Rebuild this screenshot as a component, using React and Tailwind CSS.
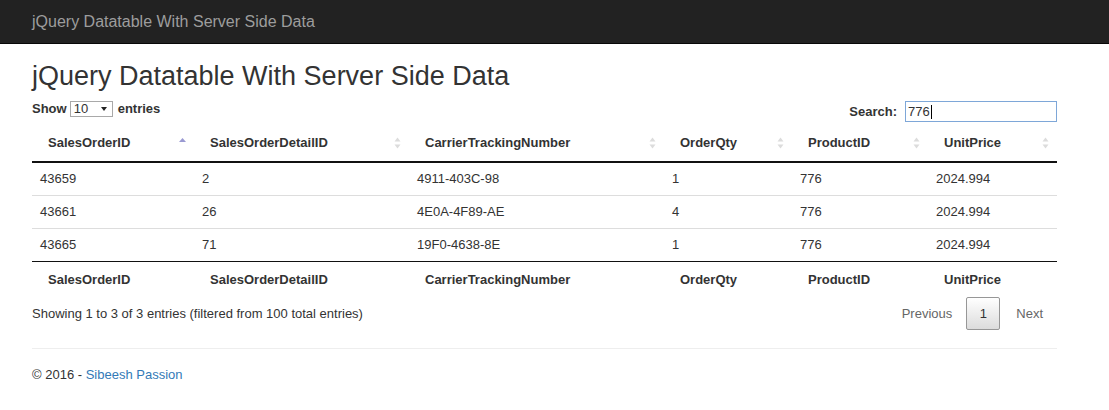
const columns = [
  { name: "SalesOrderID", width: "w-[162px]", sorted: true },
  { name: "SalesOrderDetailID", width: "w-[215px]" },
  { name: "CarrierTrackingNumber", width: "w-[255px]" },
  { name: "OrderQty", width: "w-[128px]" },
  { name: "ProductID", width: "w-[136px]" },
  { name: "UnitPrice", width: "w-[129px]" },
];

const rows = [
  ["43659", "2", "4911-403C-98", "1", "776", "2024.994"],
  ["43661", "26", "4E0A-4F89-AE", "4", "776", "2024.994"],
  ["43665", "71", "19F0-4638-8E", "1", "776", "2024.994"],
];

function SortIcon({ sorted }) {
  if (sorted) {
    return (
      <svg width="7" height="12" viewBox="0 0 7 12" className="shrink-0">
        <polygon points="3.5,1 7,5 0,5" fill="#9a9ad2" />
      </svg>
    );
  }
  return (
    <svg width="7" height="12" viewBox="0 0 7 12" className="shrink-0">
      <polygon points="3.5,0.5 6.5,4.5 0.5,4.5" fill="#dcdcdc" />
      <polygon points="0.5,7.5 6.5,7.5 3.5,11.5" fill="#dcdcdc" />
    </svg>
  );
}

export default function App() {
  return (
    <div className="min-h-[410px] bg-white text-[#333] font-['Liberation_Sans',Arial,sans-serif] text-[13px] leading-4">
      {/* navbar */}
      <nav className="h-[44px] bg-[#222] border-b border-[#080808] flex items-center">
        <span className="ml-8 text-[16px] text-[#9d9d9d]">jQuery Datatable With Server Side Data</span>
      </nav>

      <main className="ml-8 w-[1025px]">
        <h1 className="mt-[17px] text-[27px] leading-[30px] font-normal">jQuery Datatable With Server Side Data</h1>

        {/* length + filter */}
        <div className="mt-[10px] flex justify-between items-start h-[24px]">
          <div className="flex items-center font-bold">
            <span>Show</span>
            <div className="ml-[3px] mr-[5px] w-[43px] h-[16px] border border-[#a9a9a9] bg-white flex items-center justify-between pl-[3px] pr-[5px] font-normal text-[13px] leading-[14px]">
              <span>10</span>
              <svg width="6" height="4" viewBox="0 0 6 4">
                <polygon points="0,0 6,0 3,4" fill="#222" />
              </svg>
            </div>
            <span>entries</span>
          </div>
          <div className="flex items-center font-bold">
            <span>Search:</span>
            <div className="ml-[8px] w-[152px] h-[21px] border border-[#7ea7d8] bg-white flex items-center pl-[2px] font-normal">
              <span>776</span>
              <span className="w-px h-[14px] bg-black ml-px" />
            </div>
          </div>
        </div>

        {/* table */}
        <table className="w-full table-fixed border-collapse">
          <thead>
            <tr className="border-b-2 border-[#111]">
              {columns.map((c) => (
                <th key={c.name} className={`${c.width} p-0 font-bold text-left`}>
                  <div className="flex items-center justify-between pl-4 pr-2 py-[10px]">
                    <span>{c.name}</span>
                    <SortIcon sorted={c.sorted} />
                  </div>
                </th>
              ))}
            </tr>
          </thead>
          <tbody>
            {rows.map((r, i) => (
              <tr key={i} className={i > 0 ? "border-t border-[#ddd]" : ""}>
                {r.map((v, j) => (
                  <td key={j} className="px-2 py-2">{v}</td>
                ))}
              </tr>
            ))}
          </tbody>
          <tfoot>
            <tr className="border-t border-[#111]">
              {columns.map((c) => (
                <th key={c.name} className="pl-4 pr-2 py-[10px] font-bold text-left">{c.name}</th>
              ))}
            </tr>
          </tfoot>
        </table>

        {/* info + pagination */}
        <div className="flex items-center justify-between h-[33px] -mt-px">
          <span>Showing 1 to 3 of 3 entries (filtered from 100 total entries)</span>
          <div className="flex items-center text-[#666]">
            <span className="px-[14px]">Previous</span>
            <span className="w-[34px] h-[33px] flex items-center justify-center border border-[#979797] rounded-[2px] bg-gradient-to-b from-white to-[#dcdcdc] text-[#333]">1</span>
            <span className="pl-[16px] pr-[14px]">Next</span>
          </div>
        </div>

        <hr className="mt-[18px] border-0 border-t border-[#eee]" />

        <footer className="mt-[18px]">
          © 2016 - <span className="text-[#337ab7]">Sibeesh Passion</span>
        </footer>
      </main>
    </div>
  );
}
